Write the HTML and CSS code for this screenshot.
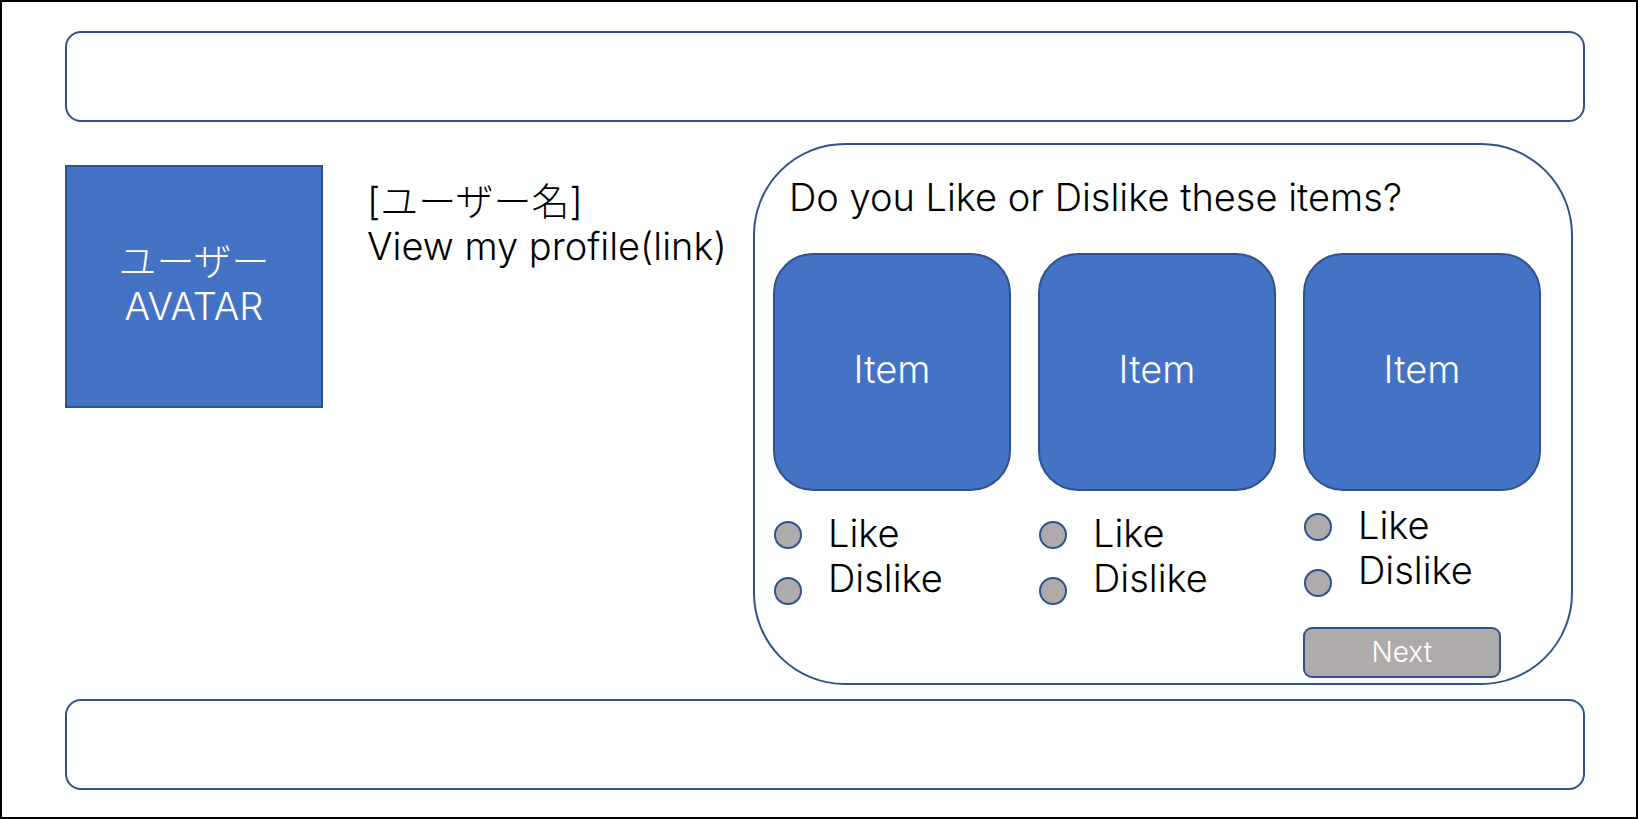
FILE: index.html
```
<!DOCTYPE html>
<html lang="ja">
<head>
<meta charset="utf-8">
<meta name="viewport" content="width=device-width, initial-scale=1">
<title>Profile</title>
<link rel="stylesheet" href="styles.css">
</head>
<body class="page">
<header class="bar"></header>
<main class="main">
  <div class="avatar">ユーザー<br>AVATAR</div>
  <div class="profile">
    <div>[ユーザー名]</div>
    <a class="profile-link" href="#profile">View my profile(link)</a>
  </div>
  <form class="panel">
    <h1 class="question">Do you Like or Dislike these items?</h1>
    <div class="items">
      <section class="item">
        <div class="card">Item</div>
        <div class="choices">
          <div class="dots">
            <input class="dot" type="radio" name="item1" id="like1">
            <input class="dot" type="radio" name="item1" id="dislike1">
          </div>
          <div class="labels">
            <label for="like1">Like</label>
            <label for="dislike1">Dislike</label>
          </div>
        </div>
      </section>
      <section class="item">
        <div class="card">Item</div>
        <div class="choices">
          <div class="dots">
            <input class="dot" type="radio" name="item2" id="like2">
            <input class="dot" type="radio" name="item2" id="dislike2">
          </div>
          <div class="labels">
            <label for="like2">Like</label>
            <label for="dislike2">Dislike</label>
          </div>
        </div>
      </section>
      <section class="item">
        <div class="card">Item</div>
        <div class="choices choices-raised">
          <div class="dots">
            <input class="dot" type="radio" name="item3" id="like3">
            <input class="dot" type="radio" name="item3" id="dislike3">
          </div>
          <div class="labels">
            <label for="like3">Like</label>
            <label for="dislike3">Dislike</label>
          </div>
        </div>
        <button class="next" type="button">Next</button>
      </section>
    </div>
  </form>
</main>
<footer class="bar"></footer>
</body>
</html>
```
FILE: styles.css
```
* { box-sizing: border-box; }

.page {
  margin: 0;
  min-height: 100vh;
  padding: 29px 51px 27px 63px;
  border: 2px solid #000;
  background: #fff;
  color: #000;
  font-family: Inter, "Noto Sans CJK JP", sans-serif;
  font-size: 38px;
  font-weight: 300;
  line-height: 45px;
}

.bar {
  height: 91px;
  border: 2px solid #2f528f;
  border-radius: 16px;
}

.main {
  display: grid;
  grid-template-columns: 258fr 430fr 820fr;
  align-items: start;
  margin: 21px 12px 14px 0;
}

.avatar {
  display: flex;
  align-items: center;
  justify-content: center;
  aspect-ratio: 258 / 243;
  margin-top: 22px;
  padding-bottom: 6px;
  border: 2px solid #2f528f;
  background: #4472c4;
  color: #fff;
  text-align: center;
}

.profile {
  padding: 36px 0 0 44px;
  white-space: nowrap;
}

.profile-link {
  color: inherit;
  text-decoration: none;
}

.panel {
  padding: 30px 30px 5px 18px;
  border: 2px solid #2f528f;
  border-radius: 92px;
}

.question {
  margin: 0 0 33px;
  padding-left: 16px;
  font-size: inherit;
  font-weight: inherit;
  white-space: nowrap;
}

.items {
  display: grid;
  grid-template-columns: repeat(3, 1fr);
  gap: 27px;
}

.card {
  display: flex;
  align-items: center;
  justify-content: center;
  aspect-ratio: 1;
  padding-bottom: 6px;
  border: 2px solid #2f528f;
  border-radius: 40px;
  background: #4472c4;
  color: #fff;
}

.choices {
  display: flex;
  gap: 26px;
  padding: 20px 0 0 1px;
}

.choices-raised { padding-top: 12px; }

.dots {
  display: grid;
  gap: 28px;
  padding-top: 10px;
}

.dot {
  appearance: none;
  width: 28px;
  height: 28px;
  margin: 0;
  border: 2px solid #2f528f;
  border-radius: 50%;
  background: #afabab;
}

.dot:checked { background: #4472c4; }

.labels {
  display: flex;
  flex-direction: column;
}

.next {
  display: block;
  width: 83%;
  height: 51px;
  margin-top: 30px;
  padding: 0;
  border: 2px solid #2f528f;
  border-radius: 9px;
  background: #afabab;
  color: #fff;
  font: inherit;
  font-size: 28px;
  line-height: 45px;
}
```
